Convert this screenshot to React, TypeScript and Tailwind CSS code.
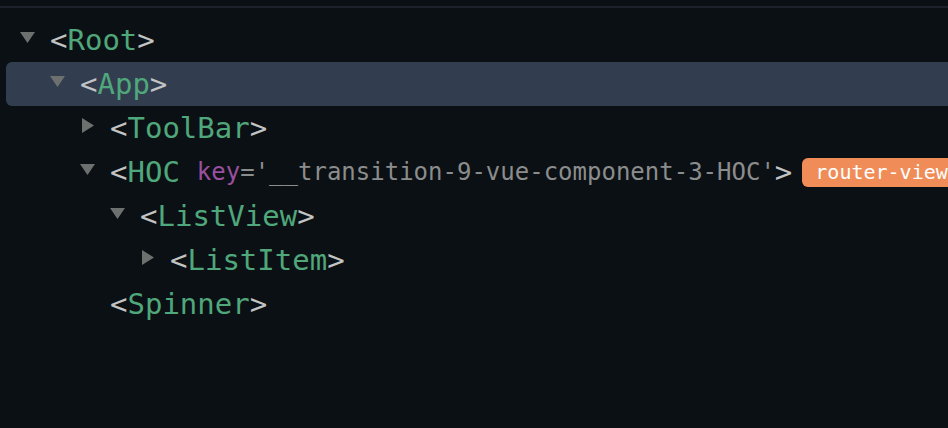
type Node = {
  name: string;
  depth: number;
  arrow?: 'down' | 'right';
  selected?: boolean;
  attrKey?: string;
  attrValue?: string;
  badge?: string;
};

const nodes: Node[] = [
  { name: 'Root', depth: 0, arrow: 'down' },
  { name: 'App', depth: 1, arrow: 'down', selected: true },
  { name: 'ToolBar', depth: 2, arrow: 'right' },
  {
    name: 'HOC',
    depth: 2,
    arrow: 'down',
    attrKey: 'key',
    attrValue: "'__transition-9-vue-component-3-HOC'",
    badge: 'router-view',
  },
  { name: 'ListView', depth: 3, arrow: 'down' },
  { name: 'ListItem', depth: 4, arrow: 'right' },
  { name: 'Spinner', depth: 2 },
];

// indentation per depth, 30px a level
const indent = ['pl-[14px]', 'pl-[44px]', 'pl-[74px]', 'pl-[104px]', 'pl-[134px]'];

function Arrow({ dir }: { dir?: 'down' | 'right' }) {
  return (
    <span className="w-[30px] h-full shrink-0 flex items-center">
      {dir === 'down' && (
        <svg width="15" height="11" viewBox="0 0 15 11" className="-mt-[5px]">
          <path d="M0 0 H15 L7.5 11 Z" fill="#6c706f" />
        </svg>
      )}
      {dir === 'right' && (
        <svg width="12" height="15" viewBox="0 0 12 15" className="ml-[2px] -mt-[5px]">
          <path d="M0 0 L12 7.5 L0 15 Z" fill="#6c706f" />
        </svg>
      )}
    </span>
  );
}

export default function App() {
  return (
    <div className="w-[948px] h-[428px] overflow-hidden bg-[#0b1014] font-['DejaVu_Sans_Mono',monospace]">
      <div className="h-[6px]" />
      <div className="h-[2px] bg-[#1c212a]" />

      {/* Component tree */}
      <div className="pt-[10px] flex flex-col">
        {nodes.map((n) => (
          <div
            key={n.name}
            className={`ml-[6px] h-[44px] flex items-center whitespace-nowrap rounded-l-[6px] ${indent[n.depth]} ${
              n.selected ? 'bg-[#323e50]' : ''
            }`}
          >
            <Arrow dir={n.arrow} />
            <span className="text-[29px] leading-none text-[#c2c4c4]">&lt;</span>
            <span className="text-[29px] leading-none text-[#4fa77b]">{n.name}</span>
            {n.attrKey && (
              <span className="text-[24px] leading-none ml-[17px]">
                <span className="text-[#99509f]">{n.attrKey}</span>
                <span className="text-[#8b8d8d]">={n.attrValue}</span>
              </span>
            )}
            <span className="text-[29px] leading-none text-[#c2c4c4]">&gt;</span>
            {n.badge && (
              <span className="ml-[10px] h-[29px] px-[13px] rounded-[6px] bg-[#f08c58] text-white text-[20px] leading-[29px]">
                {n.badge}
              </span>
            )}
          </div>
        ))}
      </div>
    </div>
  );
}
